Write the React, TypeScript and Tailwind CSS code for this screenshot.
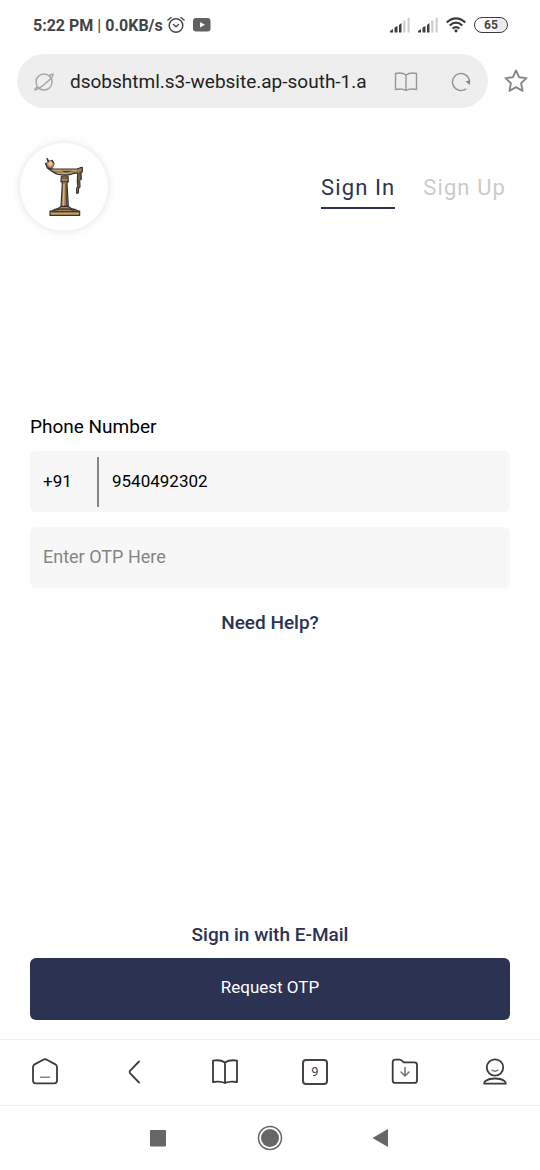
import type { ReactNode } from "react";

function Signal() {
  return (
    <svg width="20" height="16" viewBox="0 0 20 16" aria-hidden="true">
      <path d="M0 15.5V14l3-2v3.500zM4.500 10.500l3-1.500v6.500h-3zM9 8l2.500-2v9.500H9z" fill="#3f3f3f" />
      <path d="M13.200 3.500h2.300v12h-2.300zM17.500.800h2.200v14.700h-2.200z" fill="#cfcfcf" />
    </svg>
  );
}

function StatusBar() {
  return (
    <div className="flex h-[50px] items-center pr-8 pl-[33px] text-[#444]">
      <span className="pt-px text-[16px] font-bold">5:22 PM <span className="font-normal">|</span> 0.0KB/s</span>
      <svg className="ml-1" width="18" height="18" viewBox="0 0 18 18" fill="none" stroke="#4a4a4a" strokeWidth="1.500" strokeLinecap="round" aria-hidden="true">
        <circle cx="9" cy="9.500" r="6.800" />
        <path d="M1 4l3-2.500M17 4l-3-2.500M6.500 8.500L9 10.800l2.500-2.300" />
      </svg>
      <svg className="ml-2" width="18" height="14" viewBox="0 0 18 14" aria-hidden="true">
        <rect width="17.500" height="13.500" rx="3" fill="#606060" />
        <path d="M7 4l5 2.800-5 2.800z" fill="#fff" />
      </svg>
      <div className="ml-auto flex items-center gap-2">
        <Signal />
        <Signal />
        <svg width="20" height="16" viewBox="0 0 20 16" fill="none" stroke="#3c3c3c" strokeWidth="2.200" aria-hidden="true">
          <path d="M.800 5.400Q10-2.800 19.200 5.400M3.700 8.500Q10 2.900 16.300 8.500M6.600 11.600Q10 8.500 13.400 11.600" />
          <circle cx="10" cy="13.800" r="1.600" fill="#3c3c3c" stroke="none" />
        </svg>
        <span className="flex h-4 w-[34px] items-center justify-center rounded-full border border-[#3c3c3c] bg-gradient-to-r from-white from-65% to-[#ececec] to-65% text-xs font-bold">65</span>
      </div>
    </div>
  );
}

function AddressBar() {
  return (
    <div className="flex items-center gap-4 pt-1 pr-3 pl-[17px]">
      <div className="flex h-[54px] min-w-0 flex-1 items-center rounded-full bg-[#eee] px-4 pt-0.5">
        <svg className="shrink-0" width="22" height="22" viewBox="0 0 22 22" fill="none" stroke="#a5a5a5" strokeWidth="1.400" aria-hidden="true">
          <circle cx="11" cy="11" r="8" />
          <path d="M4.500 15.500C1.500 18.500 1 19 2.500 18.800 5 18 9 15.500 13 12c4-3.500 7.200-7 7.200-8.500-.2-.8-1.500-.300-4 1.200" />
        </svg>
        <input aria-label="Address" readOnly value="dsobshtml.s3-website.ap-south-1.amazonaws.com" className="ml-[15px] w-0 min-w-0 flex-1 bg-transparent text-[19px] text-[#222] outline-none" />
        <button aria-label="Reading mode" className="ml-7">
          <svg width="24" height="22" viewBox="0 0 24 22" fill="none" stroke="#969696" strokeWidth="1.400" strokeLinejoin="round">
            <path d="M1.500 2.500Q8 1 12 4q4-3 10.500-1.500v16Q16 17 12 19.500 8 17 1.500 18.500zM12 4v15.500" />
          </svg>
        </button>
        <button aria-label="Reload" className="ml-8">
          <svg width="22" height="22" viewBox="0 0 22 22" fill="none" stroke="#969696" strokeWidth="1.400">
            <path d="M16.200 17.700A8.500 8.500 0 1 1 19.500 11" />
            <path d="M15.500 10.200l4.700-.700-.400 4.500z" fill="#858585" stroke="none" />
          </svg>
        </button>
      </div>
      <button aria-label="Bookmark">
        <svg width="24" height="24" viewBox="0 0 24 24" fill="none" stroke="#878787" strokeWidth="1.900" strokeLinejoin="round">
          <path d="M12 1.500l3.200 6.800 7.300.800-5.400 5.100 1.400 7.600L12 18.200l-6.500 3.600 1.400-7.600L1.500 9.100l7.300-.800z" />
        </svg>
      </button>
    </div>
  );
}

function Logo() {
  return (
    <svg width="42" height="62" viewBox="100 80 126 186" strokeLinejoin="round" role="img" aria-label="Oil lamp on a pedestal">
      <path d="M113 88l5 7 10-2 6 10-5 12-8 3-9-6-3-10 5-4z" fill="#b88d5c" stroke="#44372e" strokeWidth="2" />
      <path d="M118 97l8-1 3 7-6 8-7-4z" fill="#edc690" />
      <path d="M107 101l6 15 10 6M111 86l6 11M126 92l6 9" fill="none" stroke="#292b38" strokeWidth="3.500" />
      <path d="M115 116l17 3h70l10-4 6-1v14l-4 1 1 20-5 4 1 20-4 3-1 15-5 1v-16l3-4-1-15 1-26-11 1q-14 7-34 5-26-2-44-21z" fill="#9e8054" stroke="#353139" strokeWidth="3.500" />
      <path d="M130 123h72M142 131q24 4 43-1" stroke="#d4af72" strokeWidth="3" fill="none" />
      <path d="M156 124h32l-9 5h-15z" fill="#4b4143" />
      <path d="M209 129l-2 28-3 16M213 126v22" stroke="#5a4936" strokeWidth="3" fill="none" />
      <path d="M155 140h20l1 17-4 4 4 70h-22l4-70-4-4z" fill="#a38452" stroke="#373239" strokeWidth="3.500" />
      <path d="M163 164l-2 67" stroke="#d9b675" strokeWidth="4" />
      <path d="M169 163l2 68M154 146h22M154 157h22" stroke="#514334" strokeWidth="3.500" />
      <path d="M154 231h22q8 9 22 10l8 4h4v13h-89v-13h5l7-4q14-2 21-10z" fill="#a98957" stroke="#35313a" strokeWidth="3.500" />
      <path d="M133 243q30-8 62 0M121 247h88" stroke="#443a36" strokeWidth="4" fill="none" />
      <path d="M124 253h83" stroke="#c9a266" strokeWidth="4" />
    </svg>
  );
}

function NavIcon({ label, children }: { label: string; children: ReactNode }) {
  return (
    <button aria-label={label} className="flex items-center justify-center">
      <svg width="30" height="30" viewBox="0 0 30 30" fill="none" stroke="#3b3b3b" strokeWidth="1.800" strokeLinecap="round" strokeLinejoin="round">
        {children}
      </svg>
    </button>
  );
}

function BrowserNav() {
  return (
    <nav aria-label="Browser" className="grid h-[67px] grid-cols-6 border-y border-[#efefef] pb-0.5">
      <NavIcon label="Home">
        <path d="M13.200 2.700L4.600 7.400Q3 8.300 3 10.200v13.300q0 2.800 2.800 2.800h18.400q2.800 0 2.800-2.800V10.200q0-1.900-1.600-2.800l-8.600-4.700q-1.800-.900-3.600 0z" />
        <path d="M10.500 20.300h9" stroke="#858585" strokeWidth="1.500" />
      </NavIcon>
      <NavIcon label="Back">
        <path d="M19 4.500L10 13.800q-1 1.200 0 2.400l9 9.300" />
      </NavIcon>
      <NavIcon label="Reading list">
        <path d="M3 3.600Q10.500 2.400 15 5.500q4.500-3.100 12-1.900V25q-7.500-1.300-12 1Q10.500 23.700 3 25zM15 5.500V26" />
      </NavIcon>
      <button aria-label="9 open tabs" className="flex items-center justify-center">
        <span className="flex size-[26px] items-center justify-center rounded border-2 border-[#444] text-[13px] leading-none text-[#444]">9</span>
      </button>
      <NavIcon label="Downloads">
        <path d="M2.700 5.200q0-2.500 2.500-2.500h4.500q1.500 0 4 2.600h10.800q2.500 0 2.500 2.500v15.600q0 2.500-2.500 2.500H5.200q-2.500 0-2.500-2.500z" />
        <path d="M15 10.500V19m-4-4l4 4 4-4" stroke="#777" strokeWidth="1.600" />
      </NavIcon>
      <NavIcon label="Profile">
        <circle cx="15" cy="10.500" r="8.200" />
        <path d="M4.200 26.700q-.3-1.400 1.700-2.900Q9 21.500 15 21.500t9.100 2.300q2 1.500 1.700 2.900z" />
        <path d="M12 13.200q3 2 6 0" stroke="#777" strokeWidth="1.500" />
      </NavIcon>
    </nav>
  );
}

function SystemNav() {
  return (
    <nav aria-label="System" className="flex h-16 items-center justify-center gap-[84px] pb-px">
      <button aria-label="Recent apps">
        <svg width="28" height="28" viewBox="0 0 28 28"><rect x="6" y="6" width="16" height="16.500" rx="1" fill="#666" /></svg>
      </button>
      <button aria-label="Home screen">
        <svg width="28" height="28" viewBox="0 0 28 28"><circle cx="14" cy="14" r="11.500" fill="none" stroke="#666" strokeWidth="1.500" /><circle cx="14" cy="14" r="9" fill="#666" /></svg>
      </button>
      <button aria-label="Go back">
        <svg width="28" height="28" viewBox="0 0 28 28"><path d="M4.500 14L20 5v18z" fill="#666" /></svg>
      </button>
    </nav>
  );
}

export default function App() {
  return (
    <div className="flex min-h-screen flex-col bg-white font-['Roboto',sans-serif] text-black">
      <StatusBar />
      <AddressBar />
      <main className="flex flex-1 flex-col pb-[19px]">
        <header className="flex items-center justify-between px-5 pt-[35px]">
          <div className="flex size-[88px] items-center justify-center rounded-full bg-white shadow-[0_0_8px_rgba(0,0,0,0.12)]">
            <Logo />
          </div>
          <div className="flex gap-7 pr-[14px] text-[22px] leading-8 tracking-wider">
            <a href="#signin" aria-current="page" className="border-b-2 border-[#2c3252] pt-1.5 pb-[3px] text-[#2c3252]">Sign In</a>
            <a href="#signup" className="pt-1.5 pb-[3px] text-[#cbcbcb]">Sign Up</a>
          </div>
        </header>
        <form className="flex flex-1 flex-col px-[30px] pt-[184px]" onSubmit={(e) => e.preventDefault()}>
          <label htmlFor="phone" className="text-[19px] leading-6">Phone Number</label>
          <div className="mt-3 flex h-[61px] items-center rounded-md bg-[#f7f7f7]">
            <input aria-label="Country code" defaultValue="+91" className="h-[50px] w-[67px] bg-transparent pb-0.5 pl-[13px] text-[17px] outline-none" />
            <input id="phone" type="tel" defaultValue="9540492302" className="h-[50px] min-w-0 flex-1 border-l-2 border-[#858585] bg-transparent pb-0.5 pl-[13px] text-[17px] outline-none" />
          </div>
          <input aria-label="One-time password" placeholder="Enter OTP Here" className="mt-[15px] h-[61px] rounded-md bg-[#f7f7f7] px-[13px] pb-0.5 text-[18px] outline-none placeholder:text-[#858585]" />
          <a href="#help" className="mt-[23px] self-center text-[19px] leading-6 font-medium text-[#2c3252]">Need Help?</a>
          <a href="#email" className="mt-auto self-center text-[19px] leading-6 font-medium text-[#2c3252]">Sign in with E-Mail</a>
          <button type="submit" className="mt-[11px] h-[62px] rounded-md bg-[#2c3252] pb-0.5 text-[17px] text-white">Request OTP</button>
        </form>
      </main>
      <BrowserNav />
      <SystemNav />
    </div>
  );
}
